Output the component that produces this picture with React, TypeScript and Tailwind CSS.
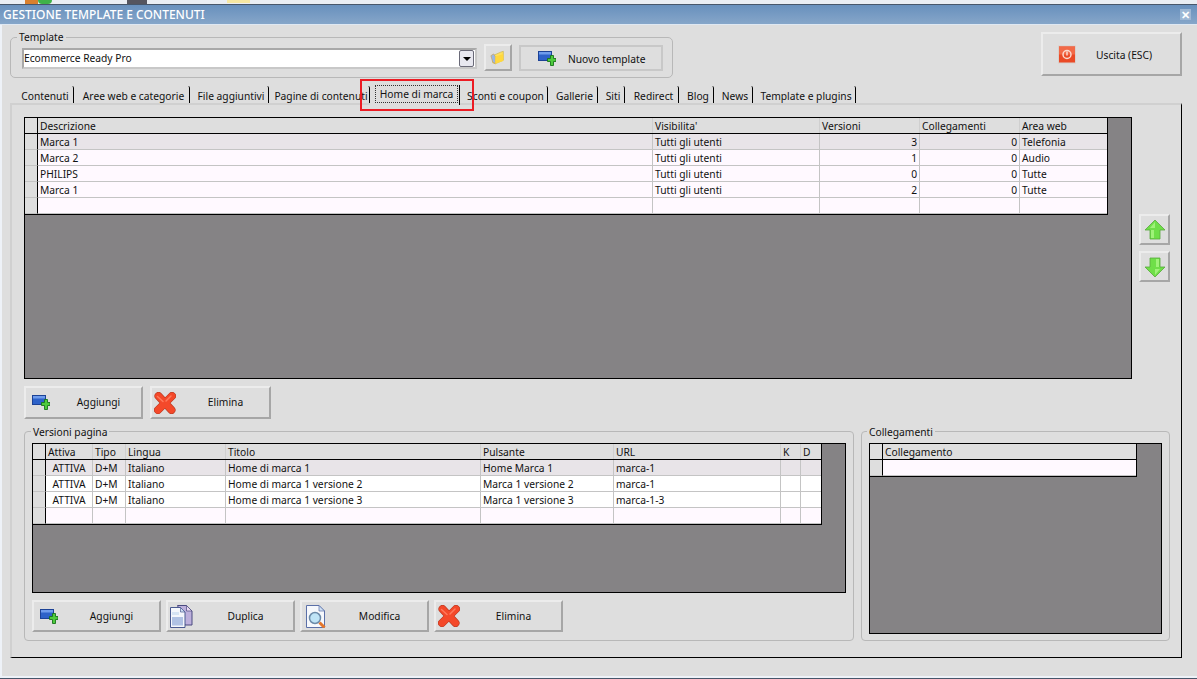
import React from "react";

const AddIcon = () => (
  <svg width="18" height="15" viewBox="0 0 18 15" className="shrink-0">
    <rect x="0.500" y="0.500" width="13" height="9" fill="#2d62c9" stroke="#1c4296" />
    <rect x="1" y="1" width="12" height="2.500" fill="#6f9cec" />
    <path d="M9.500 7.500h3v-3h3v3h2.500v3h-2.500v4h-3v-4h-3z" fill="#4ecb3c" stroke="#17741a" strokeWidth="0.900" />
  </svg>
);
const XIcon = () => (
  <svg width="22" height="22" viewBox="0 0 22 22" className="shrink-0">
    <g fill="none" strokeLinecap="round">
      <path d="M4.500 4L17.500 18M18 4L4 18" stroke="#b83a22" strokeWidth="8" />
      <path d="M4.500 4L17.500 18M18 4L4 18" stroke="#f4492a" strokeWidth="6.800" />
      <path d="M3.500 4.500L9 9.500M17 4L12 9" stroke="#ff7a5c" strokeWidth="1.500" />
    </g>
  </svg>
);
const FolderIcon = () => (
  <svg width="16" height="17" viewBox="0 0 18 18">
    <path d="M3 7l9-4 3-1v10l-9 4-3-1z" fill="#ffe15a" stroke="#c6b04a" strokeWidth="0.700" />
    <path d="M1 7l3-2 2 3v8l-3-2z" fill="#9ab6e6" stroke="#c9a04c" strokeWidth="0.700" />
    <path d="M6 8l9-3v8l-9 3z" fill="#ffd83d" />
  </svg>
);
const PowerIcon = () => (
  <svg width="18" height="19" viewBox="0 0 18 18">
    <rect x="0.500" y="0.500" width="17" height="17" fill="#ea4a26" stroke="#d9d0cc" />
    <rect x="1" y="1" width="16" height="8" fill="#f26a48" />
    <circle cx="9" cy="9" r="4" fill="none" stroke="#fbd9cf" strokeWidth="1.500" />
    <rect x="8.250" y="6" width="1.500" height="4" fill="#fbd9cf" />
  </svg>
);
const Arrow = ({ down }: { down?: boolean }) => (
  <svg width="22" height="22" viewBox="0 0 22 22" className={down ? "rotate-180" : ""}>
    <path d="M11 1L21 11h-5v9H6v-9H1z" fill="#6fdf48" stroke="#58a83e" strokeWidth="0.800" />
    <path d="M7 11h3v8H7zM6 9l5-6v6z" fill="#9ff278" />
  </svg>
);
const DupIcon = () => (
  <svg width="23" height="23" viewBox="0 0 23 23" className="shrink-0">
    <path d="M7.500 0.500h9l5.500 5.500v14h-7z" fill="#bdb0dc" stroke="#4a4a80" />
    <path d="M16.500 0.500v5.500h5.500z" fill="#e8d8f0" stroke="#4a4a80" strokeWidth="0.700" />
    <path d="M0.500 2.500h10l4.500 4.500v15.500H0.500z" fill="#f4f7fc" stroke="#4a5a90" />
    <path d="M10.500 2.500v4.500h4.500z" fill="#cfe0f4" stroke="#4a5a90" strokeWidth="0.700" />
    <rect x="2" y="12" width="11" height="8.500" fill="#b0c2e4" />
    <rect x="2" y="7" width="7" height="3" fill="#d6e4f4" />
  </svg>
);
const ModIcon = () => (
  <svg width="20" height="23" viewBox="0 0 20 23" className="shrink-0">
    <path d="M0.500 0.500h12.500l5.500 5.500v16.500H0.500z" fill="#f6f8fc" stroke="#5b70a8" />
    <path d="M13 0.500v5.500h5.500z" fill="#cfe0f4" stroke="#5b70a8" strokeWidth="0.700" />
    <circle cx="9" cy="13" r="5.500" fill="#bfe4f6" stroke="#6b8aa8" strokeWidth="1.500" />
    <path d="M13.500 17.500l5 5" stroke="#e4762c" strokeWidth="3" />
  </svg>
);

const raised = "border-2 border-t-[#ececec] border-l-[#ececec] border-r-[#a6a6a6] border-b-[#a6a6a6] bg-[#dedede]";

function Btn({ icon, label, className, iconBox }: { icon: React.ReactNode; label: string; className: string; iconBox: string }) {
  return (
    <button className={`flex items-center ${raised} ${className}`}>
      <span className={`flex shrink-0 items-center ${iconBox}`}>{icon}</span>
      <span className="flex-1 pt-[1px] text-center">{label}</span>
    </button>
  );
}

type Col = { t: string; align?: string };

function Grid({ cols, head, rows, gridClass, widthClass, rowBg }: {
  cols: string; head: Col[]; rows: string[][]; gridClass: string; widthClass: string; rowBg: string[];
}) {
  return (
    <div className={`shrink-0 overflow-hidden border border-black bg-[#858385] ${gridClass}`}>
      <div className={`border-r border-b border-black ${widthClass}`}>
        <div className={`grid h-[16px] border-b border-black bg-[#dedede] ${cols}`}>
          <div className="border-r border-black" />
          {head.map((h, i) => (
            <div key={i} className="overflow-hidden whitespace-nowrap border-r border-[#cfcfcf] pl-[2px] leading-[17px] last:border-r-0">{h.t}</div>
          ))}
        </div>
        {rows.map((r, ri) => (
          <div key={ri} className={`grid h-[16px] ${cols} ${rowBg[ri]}`}>
            <div className="border-r border-b border-r-black border-b-[#c4c4c4] bg-[#dedede]" />
            {r.map((c, ci) => (
              <div key={ci} className={`overflow-hidden whitespace-nowrap border-r border-b border-[#c4c4c4] px-[2px] leading-[17px] last:border-r-0 ${head[ci].align ?? ""}`}>{c}</div>
            ))}
          </div>
        ))}
      </div>
    </div>
  );
}

const tabs: [string, string][] = [
  ["Contenuti", "w-[61px]"],
  ["Aree web e categorie", "w-[116px]"],
  ["File aggiuntivi", "w-[79px]"],
  ["Pagine di contenuti", "w-[101px]"],
];
const tabs2: [string, string][] = [
  ["Sconti e coupon", "w-[88px]"],
  ["Gallerie", "w-[50px]"],
  ["Siti", "w-[27px]"],
  ["Redirect", "w-[54px]"],
  ["Blog", "w-[35px]"],
  ["News", "w-[39px]"],
  ["Template e plugins", "w-[103px]"],
];

function Tab({ t, w }: { t: string; w: string }) {
  return (
    <div className={`flex h-[17px] items-center justify-center self-end whitespace-nowrap rounded-tr-[2px] border-r border-r-black pl-[4px] pt-[4px] ${w}`}>{t}</div>
  );
}

export default function App() {
  return (
    <div className="relative flex h-[679px] w-[1197px] flex-col overflow-hidden bg-[#dedede] text-[10.25px] text-[#111] [font-family:'Noto_Sans',sans-serif]">
      {/* desktop strip */}
      <div className="flex h-[4px] shrink-0 bg-[#e9edf3]">
        <div className="ml-[25px] h-[4px] w-[13px] bg-[#d9802f]" />
        <div className="h-[4px] w-[14px] rounded-b-full bg-[#3fb24a]" />
        <div className="ml-[75px] h-[4px] w-[20px] bg-[#55555f]" />
        <div className="ml-[80px] h-[3px] w-[23px] bg-[#f6e7a2]" />
      </div>
      <div className="h-[1px] shrink-0 bg-[#47566a]" />
      {/* title bar */}
      <div className="flex h-[20px] shrink-0 items-center justify-between border-b border-[#dfe8f2] bg-gradient-to-b from-[#6890bd] to-[#86a6c9] pl-[3px] pr-[6px]">
        <span className="text-[12px] font-medium leading-[22px] text-white">GESTIONE TEMPLATE E CONTENUTI</span>
        <span className="flex h-[11px] w-[11px] items-center justify-center bg-[#9db7d4] text-[11px] font-bold leading-none text-white">✕</span>
      </div>

      <div className="flex flex-1 flex-col border-b-2 border-l-2 border-[#eef2f8] pl-[8px]">
        {/* top row */}
        <div className="flex h-[57px] shrink-0 items-start">
          <fieldset className="mt-[6px] flex h-[47px] w-[663px] items-start rounded-[5px] border border-[#b8b8b8] pl-[11px]">
            <legend className="-ml-[5px] px-[2px] leading-[13px]">Template</legend>
            <div className="mt-[4px] flex h-[21px] w-[455px] items-center justify-between border-2 border-[#a8a8a8] border-b-[#c8c8c8] border-r-[#c8c8c8] bg-white pr-[1px]">
              <span className="pt-[1px]">Ecommerce Ready Pro</span>
              <span className="flex h-[17px] w-[15px] items-center justify-center rounded-[2px] border border-[#6a6a78] bg-[#e8e8f0]">
                <span className="h-0 w-0 border-x-[4px] border-t-[4px] border-x-transparent border-t-black" />
              </span>
            </div>
            <div className={`ml-[7px] flex h-[27px] w-[28px] items-center justify-center ${raised}`}><FolderIcon /></div>
            <div className="ml-[7px] mt-[1px] flex h-[26px] w-[144px] items-center border-2 border-[#c8c8c8] pl-[17px]">
              <AddIcon />
              <span className="ml-[12px] pt-[3px]">Nuovo template</span>
            </div>
          </fieldset>
          <div className={`ml-auto mr-[15px] mt-[7px] flex h-[44px] w-[141px] items-center pl-[15px] ${raised}`}>
            <PowerIcon />
            <span className="ml-[20px] pt-[3px]">Uscita (ESC)</span>
          </div>
        </div>

        {/* tabs */}
        <div className="ml-[3px] flex h-[21px] shrink-0 items-end">
          {tabs.map(([t, w]) => <Tab key={t} t={t} w={w} />)}
          <div className="z-10 -mb-[2px] flex h-[20px] w-[90px] items-start border-r border-r-black bg-[#dedede] pl-[5px] pr-[1px]">
            <span className="flex h-[18px] w-full items-center justify-center border border-dotted border-[#333] pt-[2px]">Home di marca</span>
          </div>
          {tabs2.map(([t, w]) => <Tab key={t} t={t} w={w} />)}
        </div>

        {/* panel */}
        <div className="mr-[15px] flex h-[555px] shrink-0 flex-col border-b border-l-2 border-r border-t-2 border-b-black border-l-[#d0d0d0] border-r-black border-t-[#d0d0d0] pl-[12px] pt-[12px]">
          <div className="flex h-[262px] shrink-0">
            <Grid
              gridClass="h-[262px] w-[1108px]"
              widthClass="w-[1083px]"
              cols="grid-cols-[13px_615px_167px_100px_100px_87px]"
              head={[{ t: "Descrizione" }, { t: "Visibilita'" }, { t: "Versioni", align: "text-right" }, { t: "Collegamenti", align: "text-right" }, { t: "Area web" }]}
              rowBg={["bg-[#e8e4e8]", "bg-[#fff9ff]", "bg-[#fff9ff]", "bg-[#fff9ff]", "bg-[#fff9ff]"]}
              rows={[
                ["Marca 1", "Tutti gli utenti", "3", "0", "Telefonia"],
                ["Marca 2", "Tutti gli utenti", "1", "0", "Audio"],
                ["PHILIPS", "Tutti gli utenti", "0", "0", "Tutte"],
                ["Marca 1", "Tutti gli utenti", "2", "0", "Tutte"],
                ["", "", "", "", ""],
              ]}
            />
            <div className="ml-[7px] flex flex-col gap-[6px] pt-[97px]">
              <div className={`flex h-[31px] w-[31px] items-center justify-center ${raised}`}><Arrow /></div>
              <div className={`flex h-[31px] w-[31px] items-center justify-center ${raised}`}><Arrow down /></div>
            </div>
          </div>

          <div className="mt-[7px] flex h-[33px] shrink-0 gap-[7px]">
            <Btn icon={<AddIcon />} label="Aggiungi" className="w-[119px]" iconBox="w-[30px] pl-[6px]" />
            <Btn icon={<XIcon />} label="Elimina" className="w-[121px]" iconBox="w-[30px] pl-[2px]" />
          </div>

          <div className="mt-[6px] flex h-[216px] shrink-0 gap-[7px]">
            <fieldset className="h-[216px] w-[830px] rounded-[4px] border border-[#b8b8b8] pl-[7px]">
              <legend className="-ml-[1px] px-[2px] leading-[13px]"><span className="relative top-[1px]">Versioni pagina</span></legend>
              <Grid
                gridClass="mt-[5px] h-[150px] w-[814px]"
                widthClass="w-[789px]"
                cols="grid-cols-[13px_47px_33px_100px_255px_133px_167px_20px_20px]"
                head={[{ t: "Attiva", align: "text-center" }, { t: "Tipo" }, { t: "Lingua" }, { t: "Titolo" }, { t: "Pulsante" }, { t: "URL" }, { t: "K" }, { t: "D" }]}
                rowBg={["bg-[#e8e4e8]", "bg-white", "bg-white", "bg-[#fff9ff]"]}
                rows={[
                  ["ATTIVA", "D+M", "Italiano", "Home di marca 1", "Home Marca 1", "marca-1", "", ""],
                  ["ATTIVA", "D+M", "Italiano", "Home di marca 1 versione 2", "Marca 1 versione 2", "marca-1", "", ""],
                  ["ATTIVA", "D+M", "Italiano", "Home di marca 1 versione 3", "Marca 1 versione 3", "marca-1-3", "", ""],
                  ["", "", "", "", "", "", "", ""],
                ]}
              />
              <div className="mt-[7px] flex h-[32px] gap-[5px]">
                <Btn icon={<AddIcon />} label="Aggiungi" className="w-[129px]" iconBox="w-[30px] pl-[6px]" />
                <Btn icon={<DupIcon />} label="Duplica" className="w-[129px]" iconBox="w-[30px] pl-[2px]" />
                <Btn icon={<ModIcon />} label="Modifica" className="w-[129px]" iconBox="w-[30px] pl-[4px]" />
                <Btn icon={<XIcon />} label="Elimina" className="w-[129px]" iconBox="w-[30px] pl-[2px]" />
              </div>
            </fieldset>
            <fieldset className="h-[216px] w-[309px] rounded-[4px] border border-[#b8b8b8] pl-[7px]">
              <legend className="-ml-[2px] px-[2px] leading-[13px]"><span className="relative top-[1px]">Collegamenti</span></legend>
              <Grid
                gridClass="mt-[5px] h-[191px] w-[293px]"
                widthClass="w-[267px]"
                cols="grid-cols-[13px_253px]"
                head={[{ t: "Collegamento" }]}
                rowBg={["bg-[#fff9ff]"]}
                rows={[[""]]}
              />
            </fieldset>
          </div>
        </div>
      </div>
      <div className="h-[1px] shrink-0 bg-[#47566a]" />

      {/* highlight drawn over the tab strip */}
      <div className="absolute left-[360px] top-[79px] z-20 h-[32px] w-[114px] border-2 border-[#ec1c24]" />
    </div>
  );
}
